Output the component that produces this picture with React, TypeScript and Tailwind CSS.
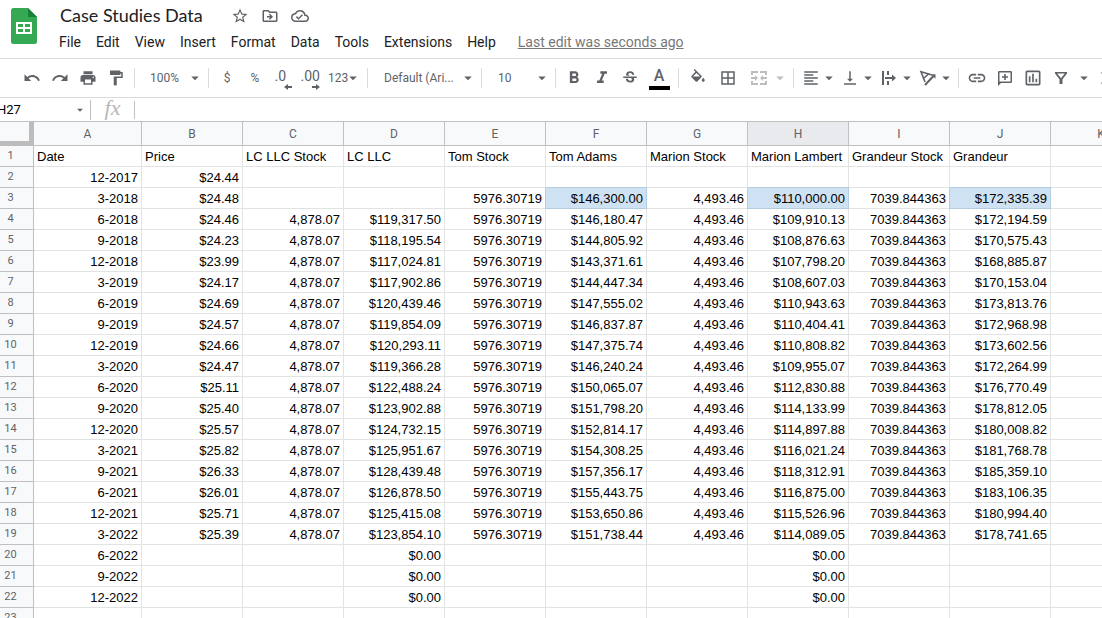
import type { ReactNode } from "react";
import {
  MdArrowDropDown,
  MdBorderAll,
  MdFormatAlignLeft,
  MdFormatBold,
  MdFormatItalic,
  MdFormatPaint,
  MdFunctions,
  MdLink,
  MdOutlineCloudDone,
  MdOutlineDriveFileMove,
  MdOutlineInsertChart,
  MdPrint,
  MdRedo,
  MdStarBorder,
  MdStrikethroughS,
  MdUndo,
  MdVerticalAlignBottom,
} from "react-icons/md";

const MENUS = ["File", "Edit", "View", "Insert", "Format", "Data", "Tools", "Extensions", "Help"];

const COLUMNS = ["A", "B", "C", "D", "E", "F", "G", "H", "I", "J", "K"];
const SELECTED_COLUMN = "H";

const LABELS = [
  "Date",
  "Price",
  "LC LLC Stock",
  "LC LLC",
  "Tom Stock",
  "Tom Adams",
  "Marion Stock",
  "Marion Lambert",
  "Grandeur Stock",
  "Grandeur",
  "",
];

// date, price, LC LLC, Tom Adams, Marion Lambert, Grandeur
const QUARTERS: [string, string, string, string, string, string][] = [
  ["3-2018", "$24.48", "", "$146,300.00", "$110,000.00", "$172,335.39"],
  ["6-2018", "$24.46", "$119,317.50", "$146,180.47", "$109,910.13", "$172,194.59"],
  ["9-2018", "$24.23", "$118,195.54", "$144,805.92", "$108,876.63", "$170,575.43"],
  ["12-2018", "$23.99", "$117,024.81", "$143,371.61", "$107,798.20", "$168,885.87"],
  ["3-2019", "$24.17", "$117,902.86", "$144,447.34", "$108,607.03", "$170,153.04"],
  ["6-2019", "$24.69", "$120,439.46", "$147,555.02", "$110,943.63", "$173,813.76"],
  ["9-2019", "$24.57", "$119,854.09", "$146,837.87", "$110,404.41", "$172,968.98"],
  ["12-2019", "$24.66", "$120,293.11", "$147,375.74", "$110,808.82", "$173,602.56"],
  ["3-2020", "$24.47", "$119,366.28", "$146,240.24", "$109,955.07", "$172,264.99"],
  ["6-2020", "$25.11", "$122,488.24", "$150,065.07", "$112,830.88", "$176,770.49"],
  ["9-2020", "$25.40", "$123,902.88", "$151,798.20", "$114,133.99", "$178,812.05"],
  ["12-2020", "$25.57", "$124,732.15", "$152,814.17", "$114,897.88", "$180,008.82"],
  ["3-2021", "$25.82", "$125,951.67", "$154,308.25", "$116,021.24", "$181,768.78"],
  ["9-2021", "$26.33", "$128,439.48", "$157,356.17", "$118,312.91", "$185,359.10"],
  ["6-2021", "$26.01", "$126,878.50", "$155,443.75", "$116,875.00", "$183,106.35"],
  ["12-2021", "$25.71", "$125,415.08", "$153,650.86", "$115,526.96", "$180,994.40"],
  ["3-2022", "$25.39", "$123,854.10", "$151,738.44", "$114,089.05", "$178,741.65"],
];

const ROWS: string[][] = [
  LABELS,
  ["12-2017", "$24.44", "", "", "", "", "", "", "", "", ""],
  ...QUARTERS.map(([date, price, lc, tom, marion, grandeur]) => [
    date,
    price,
    lc ? "4,878.07" : "",
    lc,
    "5976.30719",
    tom,
    "4,493.46",
    marion,
    "7039.844363",
    grandeur,
    "",
  ]),
  ...["6-2022", "9-2022", "12-2022"].map((date) => [date, "", "", "$0.00", "", "", "", "$0.00", "", "", ""]),
  ["", "", "", "", "", "", "", "", "", "", ""],
];

const HIGHLIGHTED = ["F3", "H3", "J3"];

function Tool({ label, children }: { label: string; children: ReactNode }) {
  return (
    <button type="button" aria-label={label} className="flex h-7 w-7 shrink-0 items-center justify-center">
      {children}
    </button>
  );
}

function WideTool({ label, children }: { label: string; children: ReactNode }) {
  return (
    <button type="button" aria-label={label} className="flex h-7 w-[30px] shrink-0 items-center justify-center">
      {children}
    </button>
  );
}

function MenuTool({ label, children }: { label: string; children: ReactNode }) {
  return (
    <button type="button" aria-label={label} className="flex h-7 w-[39px] shrink-0 items-center pl-1">
      {children}
      <MdArrowDropDown size={18} className="shrink-0" />
    </button>
  );
}

function Divider() {
  return <div className="mx-1 h-5 w-px shrink-0 bg-[#dadce0]" />;
}

function Picker({ label, value, className }: { label: string; value: string; className: string }) {
  return (
    <div className={className}>
      <select
        aria-label={label}
        defaultValue={value}
        className="h-6 min-w-0 flex-1 appearance-none bg-transparent text-xs outline-none"
      >
        <option>{value}</option>
      </select>
      <MdArrowDropDown size={18} className="pointer-events-none shrink-0" />
    </div>
  );
}

function SheetsLogo() {
  return (
    <svg width="26" height="36" viewBox="0 0 26 36" className="shrink-0" aria-label="Sheets">
      <path d="M2.500 0H17l9 9v24.500a2.500 2.500 0 0 1-2.500 2.500h-21A2.500 2.500 0 0 1 0 33.500V2.500A2.500 2.500 0 0 1 2.500 0z" fill="#34a853" />
      <path d="M17 0l9 9h-9z" fill="#188038" />
      <path
        d="M5 14v12h16V14H5zm2 2h5v3H7v-3zm7 0h5v3h-5v-3zm-7 5h5v3H7v-3zm7 0h5v3h-5v-3z"
        fill="#fff"
        fillRule="evenodd"
      />
    </svg>
  );
}

function FillIcon() {
  return (
    <svg width="18" height="18" viewBox="0 0 24 24" fill="currentColor" className="shrink-0">
      <path d="M16.560 8.940L7.620 0 6.210 1.410l2.380 2.380-5.150 5.150c-.590.590-.590 1.540 0 2.120l5.500 5.500c.290.290.680.440 1.060.440s.770-.150 1.060-.440l5.500-5.500c.590-.580.590-1.530 0-2.120zM5.210 10L10 5.210 14.790 10H5.210zM19 11.500s-2 2.170-2 3.500c0 1.100.900 2 2 2s2-.900 2-2c0-1.330-2-3.500-2-3.500z" />
    </svg>
  );
}

function FilterIcon() {
  return (
    <svg width="18" height="18" viewBox="0 0 18 18" fill="currentColor" className="shrink-0">
      <path d="M3 3h12v1.500l-4.500 5.700V15h-3v-4.800L3 4.500zm2.300 1.600L9 9.200l3.700-4.600z" fillRule="evenodd" />
    </svg>
  );
}

function MergeIcon() {
  return (
    <svg width="16" height="14" viewBox="0 0 16 14" fill="#bdbdbd" className="shrink-0">
      <path d="M0 0h7v2H2v2H0zM9 0h7v4h-2V2H9zM0 10h2v2h5v2H0zM14 10h2v4H9v-2h5z" />
      <path d="M0 6h4V4l3 3-3 3V8H0zM16 6h-4V4L9 7l3 3V8h4z" />
    </svg>
  );
}

function OverflowIcon() {
  return (
    <svg width="18" height="18" viewBox="0 0 18 18" fill="currentColor" className="shrink-0">
      <path d="M2 2h2v14H2zM7 2h2v4H7zM7 12h2v4H7zM5 8h7V5.500L16 9l-4 3.500V10H5z" />
    </svg>
  );
}

function RotateIcon() {
  return (
    <svg width="18" height="18" viewBox="0 0 18 18" fill="none" stroke="currentColor" strokeWidth="1.600" className="shrink-0">
      <path d="M6 13L2 2.800l11 3.200M4.500 9.500L9.500 5" />
      <path d="M6 16L15 6.500" strokeWidth="2" />
      <path d="M12 5.200h4.500v4.500z" fill="currentColor" stroke="none" />
    </svg>
  );
}

function CommentIcon() {
  return (
    <svg width="18" height="18" viewBox="0 0 18 18" fill="currentColor" className="shrink-0">
      <path
        d="M3.300 2h11.400A1.300 1.300 0 0 1 16 3.300v9.400a1.300 1.300 0 0 1-1.300 1.300H5l-3 3V3.300A1.300 1.300 0 0 1 3.300 2zm.200 1.500v9h11v-9z"
        fillRule="evenodd"
      />
      <path d="M8.200 5h1.600v2.200H12v1.600H9.800V11H8.200V8.800H6V7.200h2.200z" />
    </svg>
  );
}

function DecimalTool({ label, digits, right }: { label: string; digits: string; right?: boolean }) {
  return (
    <button type="button" aria-label={label} className="flex h-7 w-7 shrink-0 flex-col items-end pt-1 pr-[5px]">
      <span className={right ? "text-sm leading-4" : "pr-[6px] text-sm leading-4"}>{digits}</span>
      <svg width="8" height="6" viewBox="0 0 8 6" fill="currentColor" className="shrink-0">
        {right ? <path d="M0 2h4V0l4 3-4 3V4H0z" /> : <path d="M8 2H4V0L0 3l4 3V4h4z" />}
      </svg>
    </button>
  );
}

function Header() {
  return (
    <header className="flex h-[59px] shrink-0 items-start overflow-hidden border-b border-[#dadce0] pt-1 pl-[11px]">
      <div className="pt-1">
        <SheetsLogo />
      </div>
      <div className="ml-[22px]">
        <div className="flex h-6 items-center text-[#5f6368]">
          <h1 className="pb-0.5 pl-px font-['Lato',sans-serif] text-lg leading-6 whitespace-nowrap text-[#202124]">Case Studies Data</h1>
          <div className="ml-7 flex gap-3">
            <button type="button" aria-label="Star">
              <MdStarBorder size={18} />
            </button>
            <button type="button" aria-label="Move">
              <MdOutlineDriveFileMove size={18} />
            </button>
            <button type="button" aria-label="See document status">
              <MdOutlineCloudDone size={18} />
            </button>
          </div>
        </div>
        <nav className="mt-1 flex h-5 items-center gap-[15px] text-sm whitespace-nowrap text-[#202124]">
          {MENUS.map((menu) => (
            <button type="button" key={menu}>
              {menu}
            </button>
          ))}
          <a href="#history" className="ml-[7px] text-[#777] underline">
            Last edit was seconds ago
          </a>
        </nav>
      </div>
    </header>
  );
}

function Toolbar() {
  return (
    <div
      role="toolbar"
      aria-label="Main"
      className="flex h-[39px] shrink-0 items-center overflow-hidden border-b border-[#dadce0] pl-[18px] text-xs text-[#5f6368]"
    >
      <Tool label="Undo"><MdUndo size={18} /></Tool>
      <Tool label="Redo"><MdRedo size={18} /></Tool>
      <Tool label="Print"><MdPrint size={18} /></Tool>
      <Tool label="Paint format"><MdFormatPaint size={18} /></Tool>
      <Divider />
      <Picker label="Zoom" value="100%" className="flex w-[65px] shrink-0 items-center pl-[11px]" />
      <Divider />
      <Tool label="Format as currency">$</Tool>
      <Tool label="Format as percent">%</Tool>
      <DecimalTool label="Decrease decimal places" digits=".0" />
      <DecimalTool label="Increase decimal places" digits=".00" right />
      <button type="button" aria-label="More formats" className="flex h-7 w-[38px] shrink-0 items-center pl-[3px]">
        123
        <MdArrowDropDown size={18} className="-ml-1 shrink-0" />
      </button>
      <Divider />
      <Picker label="Font" value="Default (Ari..." className="flex w-[105px] shrink-0 items-center pl-3" />
      <Divider />
      <Picker label="Font size" value="10" className="flex w-[65px] shrink-0 items-center pl-3" />
      <Divider />
      <Tool label="Bold"><MdFormatBold size={20} /></Tool>
      <Tool label="Italic"><MdFormatItalic size={20} /></Tool>
      <Tool label="Strikethrough"><MdStrikethroughS size={18} /></Tool>
      <WideTool label="Text color">
        <span className="w-[21px] border-b-4 border-black pt-0.5 pb-0.5 text-center text-base leading-4 font-medium">A</span>
      </WideTool>
      <Divider />
      <WideTool label="Fill color"><FillIcon /></WideTool>
      <WideTool label="Borders"><MdBorderAll size={18} /></WideTool>
      <button type="button" aria-label="Merge cells" className="flex h-7 w-[46px] shrink-0 items-center gap-1 pl-2 text-[#bdbdbd]">
        <MergeIcon />
        <MdArrowDropDown size={18} className="shrink-0" />
      </button>
      <Divider />
      <MenuTool label="Horizontal align"><MdFormatAlignLeft size={18} className="shrink-0" /></MenuTool>
      <MenuTool label="Vertical align"><MdVerticalAlignBottom size={18} className="shrink-0" /></MenuTool>
      <MenuTool label="Text wrapping"><OverflowIcon /></MenuTool>
      <MenuTool label="Text rotation"><RotateIcon /></MenuTool>
      <Divider />
      <Tool label="Insert link"><MdLink size={20} /></Tool>
      <Tool label="Insert comment"><CommentIcon /></Tool>
      <Tool label="Insert chart"><MdOutlineInsertChart size={20} /></Tool>
      <Tool label="Create a filter"><FilterIcon /></Tool>
      <button type="button" aria-label="Filter views" className="shrink-0"><MdArrowDropDown size={18} /></button>
      <button type="button" aria-label="Functions" className="ml-1 shrink-0"><MdFunctions size={18} /></button>
    </div>
  );
}

function FormulaBar() {
  return (
    <div className="flex h-6 shrink-0 items-center overflow-hidden border-b border-[#c0c0c0] bg-white">
      <input
        aria-label="Name box"
        defaultValue="H27"
        className="-ml-[3px] w-[76px] shrink-0 bg-transparent text-[13px] text-black outline-none"
      />
      <button type="button" aria-label="Named ranges" className="shrink-0 text-[#5f6368]">
        <MdArrowDropDown size={14} />
      </button>
      <div className="ml-[3px] h-5 w-px shrink-0 bg-[#c0c0c0]" />
      <label htmlFor="formula" className="w-[43px] shrink-0 pb-1 text-center font-['Liberation_Serif',serif] text-[22px] leading-5 text-[#b7b7b7] italic">
        fx
      </label>
      <div className="h-[18px] w-px shrink-0 bg-[#c0c0c0]" />
      <input id="formula" className="min-w-0 flex-1 bg-transparent px-2 text-[13px] outline-none" />
    </div>
  );
}

function cellClass(address: string, text: boolean) {
  const align = text ? "text-left" : "text-right";
  const fill = HIGHLIGHTED.includes(address)
    ? "border-[#b4cce0] bg-[#cfe2f3] shadow-[-1px_0_0_#b4cce0,0_-1px_0_#b4cce0]"
    : "border-[#e2e3e3]";
  return `border-r border-b px-[3px] pt-0.5 pb-0 ${align} ${fill}`;
}

function Sheet() {
  return (
    <main className="min-h-0 flex-1 overflow-hidden">
      <table className="w-px table-fixed border-separate border-spacing-0 font-['Liberation_Sans',Arial,sans-serif] text-[13px] leading-[18px] whitespace-nowrap text-black">
        <colgroup>
          <col className="w-[34px]" />
          {COLUMNS.map((column) => (
            <col key={column} className={column === "A" ? "w-[108px]" : "w-[101px]"} />
          ))}
        </colgroup>
        <thead>
          <tr className="h-6 font-['Roboto',sans-serif] text-xs text-[#5f6368]">
            <td className="border-r-[5px] border-b-[5px] border-[#bcbcbc] bg-[#f8f9fa] p-0" />
            {COLUMNS.map((column) => (
              <th
                key={column}
                scope="col"
                className={
                  column === SELECTED_COLUMN
                    ? "border-r border-b border-[#c0c0c0] bg-[#e8eaed] p-0 font-normal"
                    : "border-r border-b border-[#c0c0c0] bg-[#f8f9fa] p-0 font-normal"
                }
              >
                {column}
              </th>
            ))}
          </tr>
        </thead>
        <tbody>
          {ROWS.map((row, r) => (
            <tr key={r} className="h-[21px]">
              <th
                scope="row"
                className="border-r border-b border-[#c0c0c0] bg-[#f8f9fa] p-0 pr-3 text-center font-['Roboto',sans-serif] text-[11px] leading-4 font-normal text-[#5f6368]"
              >
                {r + 1}
              </th>
              {row.map((value, c) => (
                <td key={COLUMNS[c]} className={cellClass(`${COLUMNS[c]}${r + 1}`, r === 0)}>
                  {value}
                </td>
              ))}
            </tr>
          ))}
        </tbody>
      </table>
    </main>
  );
}

export default function App() {
  return (
    <div className="flex h-screen flex-col overflow-hidden bg-white font-['Roboto',sans-serif]">
      <Header />
      <Toolbar />
      <FormulaBar />
      <Sheet />
    </div>
  );
}
